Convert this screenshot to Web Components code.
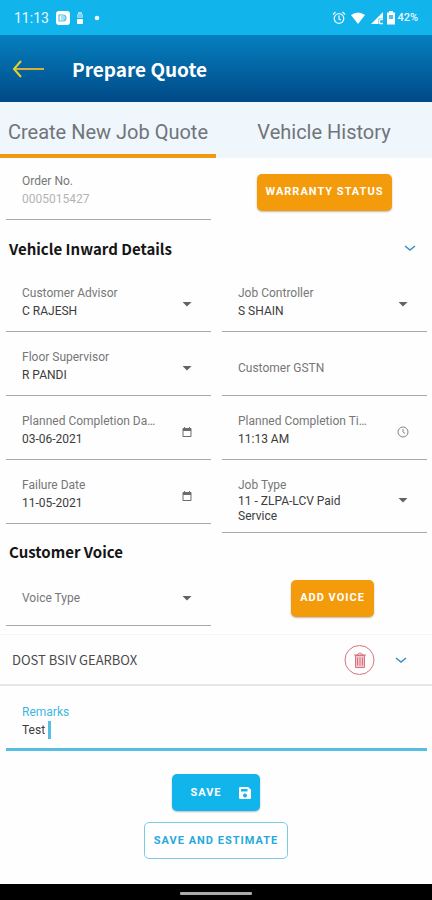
<!DOCTYPE html>
<html lang="en">
<head>
<meta charset="utf-8">
<meta name="viewport" content="width=device-width, initial-scale=1">
<title>Prepare Quote</title>
<style>
  html, body { margin: 0; }
  body {
    --cyan: #12b4ec;
    --orange: #f49b0b;
    --line: #a9a9a9;
    --muted: #777;
    --ink: #3c3c3c;
    --heading: "Noto Sans CJK SC", "Noto Sans", sans-serif;
    font-family: Roboto, "Liberation Sans", sans-serif;
    color: var(--ink);
    background: #fefefe;
  }
</style>
</head>
<body>
<quote-page></quote-page>

<script>
const define = (name, render) => customElements.define(name, class extends HTMLElement {
  connectedCallback() {
    if (this.shadowRoot) return;
    this.attachShadow({ mode: "open" }).innerHTML = render(this);
  }
});

const ICONS = {
  arrow: '<svg width="12" height="12" viewBox="0 0 12 12"><path d="M1.500 4h9L6 8.500z" fill="#626262"/></svg>',
  calendar: '<svg width="12" height="12" viewBox="0 0 12 12" fill="none" stroke="#6c6c6c"><path d="M2 2.500h8v8H2z"/><path d="M2 4h8" stroke-width="2"/><path d="M3.500 1v2M8.500 1v2"/></svg>',
  clock: '<svg width="12" height="12" viewBox="0 0 12 12" fill="none" stroke="#858585"><circle cx="6" cy="6" r="5"/><path d="M6 3v3l2 1.500"/></svg>',
  chevron: '<svg width="12" height="12" viewBox="0 0 12 12" fill="none" stroke="#3d8fc4" stroke-width="1.600"><path d="M1 4l5 4 5-4"/></svg>',
  save: '<svg width="14" height="14" viewBox="0 0 14 14"><path d="M2.200 1h8L13 3.800v8A1.200 1.200 0 0 1 11.800 13H2.200A1.200 1.200 0 0 1 1 11.800V2.200A1.200 1.200 0 0 1 2.200 1zM3 3v2.500h6.500V3zM7 7.500a2 2 0 1 0 .01 0z" fill="#fff" fill-rule="evenodd"/></svg>'
};

define("status-bar", () => `
  <style>
    :host { display: flex; align-items: center; height: 35px; padding: 0 14px; background: #12b4ec; color: #e6f8ff; }
    .time { font-size: 14px; margin-right: 7px; }
    .left, .right { display: flex; align-items: center; gap: 6px; }
    .right { margin-left: auto; gap: 4px; }
    .pct { font-size: 11px; font-weight: 500; }
    svg { display: block; }
    .signal { margin-right: -2px; }
    .battery { margin-right: -3px; }
  </style>
  <span class="time">11:13</span>
  <div class="left">
    <svg width="14" height="14" viewBox="0 0 14 14"><rect width="14" height="14" rx="3" fill="#fff"/><path d="M3 4h4q3 0 3 3t-3 3H3zM5 6h4M5 8h5" fill="none" stroke="#4fc0ea" stroke-width="1.200"/></svg>
    <svg width="8" height="14" viewBox="0 0 8 14"><path d="M2 1h4v2H2z" fill="#9fe0f8"/><rect x="1" y="3" width="6" height="4" fill="#7fd6f6"/><rect x="1" y="8" width="6" height="5" rx="1" fill="#fff"/></svg>
    <svg width="12" height="14" viewBox="0 0 12 14"><circle cx="7" cy="7" r="2.300" fill="#e8faff"/></svg>
  </div>
  <div class="right">
    <svg width="14" height="14" viewBox="0 0 14 14" fill="none" stroke="#e6f8ff" stroke-width="1.300"><circle cx="7" cy="7.500" r="4.800"/><path d="M7 4.500V8l2 1M1 3.500L3.500 1M13 3.500L10.500 1"/></svg>
    <svg width="16" height="14" viewBox="0 0 16 14"><path d="M1 4q7-5 14 0L8 13z" fill="#fff"/></svg>
    <svg class="signal" width="14" height="14" viewBox="0 0 14 14"><path d="M13 1v6.500H8.500V13H1z" fill="#fff"/><path d="M9.500 8.500v4M9.500 8.500h3.500M9.500 12.500H13" fill="none" stroke="#fff" stroke-width="1.300"/></svg>
    <svg class="battery" width="10" height="14" viewBox="0 0 10 14"><path d="M3 0h4v1.500h2V13.500H1V1.500h2z" fill="#fff"/><path d="M3 4h4v4H3z" fill="#4cc3ee"/></svg>
    <span class="pct">42%</span>
  </div>
`);

define("app-header", () => `
  <style>
    :host { display: flex; align-items: center; gap: 28px; height: 67px; padding: 0 12px; background: linear-gradient(#0580bf, #014987); }
    button { border: 0; padding: 0; background: none; }
    svg { display: block; }
    h1 { margin: 0; font: 700 19px/28px var(--heading); color: #fff; }
  </style>
  <button type="button" aria-label="Back">
    <svg width="32" height="18" viewBox="0 0 32 18" fill="none" stroke-width="2"><path d="M2 9h30" stroke="#d9ae38"/><path d="M9 1L2 9l7 8" stroke="#e3d22c"/></svg>
  </button>
  <h1><slot></slot></h1>
`);

define("tab-strip", () => `
  <style>:host { display: grid; grid-template-columns: 1fr 1fr; background: #eff6fc; }</style>
  <slot></slot>
`);

define("tab-item", el => `
  <style>
    :host { display: block; }
    button { box-sizing: border-box; width: 100%; height: 56px; padding: 8px 0 0; border: 0; border-bottom: 4px solid transparent; background: none; color: #6f757a; font: 400 20px/24px Roboto, sans-serif; white-space: nowrap; }
    :host([active]) button { border-color: #f09a10; }
  </style>
  <button type="button" role="tab" aria-selected="${el.hasAttribute("active")}"><slot></slot></button>
`);

define("field-row", () => `
  <style>
    :host { display: grid; grid-template-columns: 1fr 1fr; gap: 0 11px; align-items: start; padding: 0 5px 0 6px; }
    :host([first]) { margin-top: -2px; }
    :host([single]) { grid-template-columns: 1fr; }
  </style>
  <slot></slot>
`);

/* Form field. kind: text | select | wrap | date | time */
define("form-field", el => {
  const a = n => el.getAttribute(n) || "";
  const kind = a("kind") || "text", label = a("label"), value = a("value");
  const empty = !el.hasAttribute("value");
  let control;
  if (kind === "select") control = `<select id="c" ${empty ? `aria-label="${label}"` : ""}><option>${empty ? label : value}</option></select>`;
  else if (kind === "wrap") control = `<div class="wrapped"><span aria-hidden="true">${value}</span><select id="c"><option>${value}</option></select></div>`;
  else control = `<input id="c" type="text" ${empty ? `placeholder="${label}" aria-label="${label}"` : `value="${value}"`} ${el.hasAttribute("disabled") ? "disabled" : ""}>`;
  const icon = { select: ICONS.arrow, wrap: ICONS.arrow,
    date: `<button type="button" aria-label="Choose date">${ICONS.calendar}</button>`,
    time: `<button type="button" aria-label="Choose time">${ICONS.clock}</button>` }[kind] || "";
  return `
  <style>
    :host { display: flex; box-sizing: border-box; align-items: center; gap: 24px; min-height: 64px; min-width: 0; padding: 0 18px 0 16px; border-bottom: 1px solid var(--line); }
    .text { flex: 1; min-width: 0; padding: 16px 0 11px; }
    .text.wrap { padding-bottom: 8px; }
    .text.empty { padding: 8px 0 0; }
    label { display: block; font-size: 12px; line-height: 18px; color: var(--muted); white-space: nowrap; overflow: hidden; text-overflow: ellipsis; }
    input, select { display: block; box-sizing: border-box; width: 100%; height: 18px; margin: 0; padding: 0; border: 0; outline: 0; background: none; appearance: none; font: 400 12px/18px Roboto, sans-serif; color: var(--ink); opacity: 1; }
    input:disabled { color: #b4b4b4; }
    .empty input, .empty select, input::placeholder { color: var(--muted); }
    .wrapped { position: relative; font-size: 12px; line-height: 15px; }
    .wrapped select { position: absolute; inset: 0; height: 100%; opacity: 0; }
    .icon { padding-top: 8px; }
    button { display: block; border: 0; padding: 0; background: none; }
    svg { display: block; }
    .caret { display: none; }
    :host([focused]) { border-bottom: 3px solid #58bedf; --muted: #3eb8e0; }
    :host([focused]) .text { padding: 17px 0 9px; }
    :host([focused]) .line { display: flex; align-items: center; gap: 3px; }
    :host([focused]) input { width: auto; field-sizing: content; caret-color: transparent; }
    :host([focused]) .caret { display: block; width: 3px; height: 18px; background: #58bedf; }
  </style>
  <div class="text ${kind} ${empty ? "empty" : ""}">
    ${empty ? "" : `<label for="c">${label}</label>`}
    <div class="line">${control}<i class="caret"></i></div>
  </div>
  ${icon ? `<div class="icon">${icon}</div>` : ""}`;
});

define("section-title", el => `
  <style>
    :host { display: flex; align-items: center; justify-content: space-between; padding: 8px 16px 0 9px; min-height: 21px; }
    :host([expandable]) { min-height: 40px; }
    h2 { margin: 0; font: 700 15px/21px var(--heading); color: #151515; }
    button { display: block; border: 0; padding: 0; background: none; }
    svg { display: block; }
  </style>
  <h2><slot></slot></h2>
  ${el.hasAttribute("expandable") ? `<button type="button" aria-label="Toggle section">${ICONS.chevron}</button>` : ""}
`);

/* variant: cyan | outline, orange by default; "inline" sits beside a field */
define("action-button", el => `
  <style>
    :host { display: flex; justify-content: center; align-self: center; }
    :host([inline]) { padding-top: 8px; }
    :host([inset]) { padding-left: 16px; }
    button { display: flex; align-items: center; gap: 16px; box-sizing: border-box; height: 37px; padding: 0 9px; border: 0; border-radius: 5px; color: #fff; background: var(--orange); box-shadow: 0 1px 2px #0004; font: 700 11px/16px Roboto, sans-serif; letter-spacing: 1px; text-transform: uppercase; white-space: nowrap; }
    :host([variant="cyan"]) button { background: var(--cyan); padding: 0 8px 0 18px; }
    :host([variant="outline"]) button { background: #fff; color: #27a9dc; border: 1px solid #7acce6; box-shadow: none; }
    svg { display: block; }
  </style>
  <button type="button"><slot></slot>${el.getAttribute("icon") ? ICONS[el.getAttribute("icon")] : ""}</button>
`);

define("voice-item", () => `
  <style>
    :host { display: flex; align-items: center; box-sizing: border-box; height: 52px; margin-top: 8px; padding: 0 25px 0 12px; border-top: 1px solid #f5f5f5; border-bottom: 2px solid #e6e6e6; }
    span { flex: 1; font: 400 13px/18px var(--heading); color: #4a4a4a; }
    button { display: block; border: 0; padding: 0; background: none; }
    .del { margin-right: 20px; }
    svg { display: block; }
  </style>
  <span><slot></slot></span>
  <button class="del" type="button" aria-label="Delete voice">
    <svg width="31" height="32" viewBox="0 0 31 32" fill="none" stroke="#d8727e"><circle cx="15.500" cy="16" r="14.500"/><path d="M11.500 11.500h9v12h-9z" fill="#f3c6ca"/><path d="M10 11h12M13 11q2.500-4 6 0M13.500 13.500v8M16 13.500v8M18.500 13.500v8"/></svg>
  </button>
  <button type="button" aria-label="Expand voice">${ICONS.chevron}</button>
`);

define("nav-bar", () => `
  <style>
    :host { display: flex; height: 16px; justify-content: center; align-items: center; padding-top: 2px; box-sizing: border-box; background: #000; }
    i { width: 72px; height: 3px; border-radius: 1px; background: #aaa; }
  </style><i></i>
`);

define("quote-page", () => `
  <style>
    :host { display: flex; flex-direction: column; min-height: 100vh; }
    main { flex: 1; }
    .actions { display: flex; flex-direction: column; gap: 11px; padding: 23px 0; }
  </style>
  <status-bar></status-bar>
  <app-header>Prepare Quote</app-header>
  <tab-strip role="tablist"><tab-item active>Create New Job Quote</tab-item><tab-item>Vehicle History</tab-item></tab-strip>
  <main>
    <field-row first>
      <form-field label="Order No." value="0005015427" disabled></form-field>
      <action-button inline>Warranty Status</action-button>
    </field-row>
    <section-title expandable>Vehicle Inward Details</section-title>
    <field-row>
      <form-field kind="select" label="Customer Advisor" value="C RAJESH"></form-field>
      <form-field kind="select" label="Job Controller" value="S SHAIN"></form-field>
      <form-field kind="select" label="Floor Supervisor" value="R PANDI"></form-field>
      <form-field label="Customer GSTN"></form-field>
      <form-field kind="date" label="Planned Completion Date" value="03-06-2021"></form-field>
      <form-field kind="time" label="Planned Completion Time" value="11:13 AM"></form-field>
      <form-field kind="date" label="Failure Date" value="11-05-2021"></form-field>
      <form-field kind="wrap" label="Job Type" value="11 - ZLPA-LCV Paid Service"></form-field>
    </field-row>
    <section-title>Customer Voice</section-title>
    <field-row>
      <form-field kind="select" label="Voice Type"></form-field>
      <action-button inline inset>Add Voice</action-button>
    </field-row>
    <voice-item>DOST BSIV GEARBOX</voice-item>
    <field-row single>
      <form-field label="Remarks" value="Test" focused></form-field>
    </field-row>
    <div class="actions">
      <action-button variant="cyan" icon="save">Save</action-button>
      <action-button variant="outline">Save and Estimate</action-button>
    </div>
  </main>
  <nav-bar></nav-bar>
`);
</script>
</body>
</html>
